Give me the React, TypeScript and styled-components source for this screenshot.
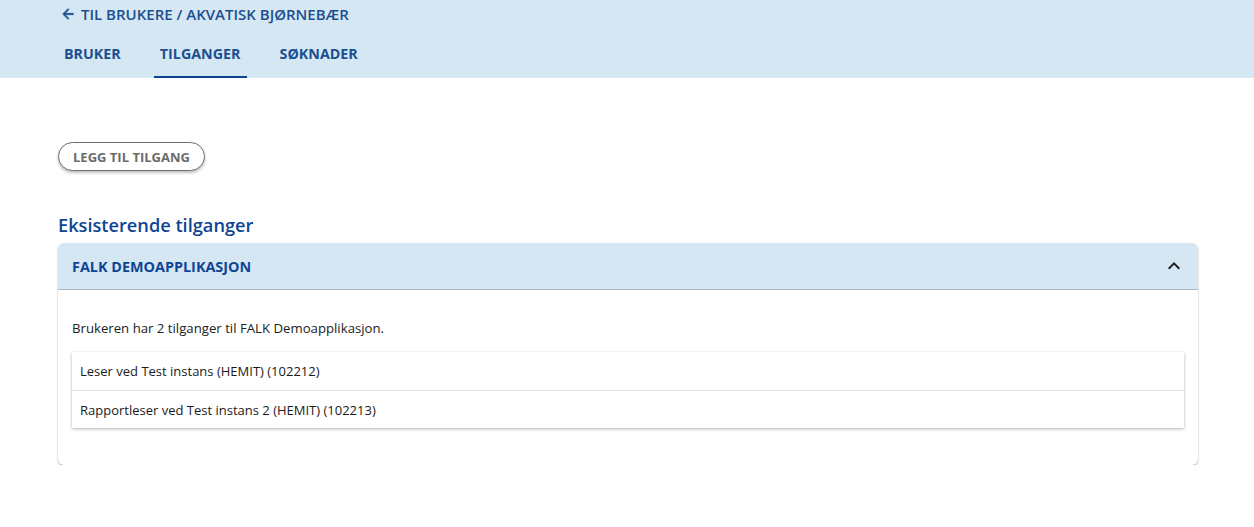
import React from "react";
import styled, { createGlobalStyle } from "styled-components";

const Global = createGlobalStyle`
  html, body { margin: 0; padding: 0; background: #ffffff; }
  body { font-family: "Open Sans", "Noto Sans", sans-serif; color: #1f1f1f; }
  * { box-sizing: border-box; }
`;

const Header = styled.header`
  background: #d6e7f4;
  height: 78px;
  padding: 0 0 0 58px;
  display: flex;
  flex-direction: column;
`;

const BackLink = styled.a`
  display: flex;
  align-items: center;
  gap: 5px;
  margin-top: 4px;
  height: 20px;
  padding-left: 2px;
  color: #1b4f8f;
  font-size: 15px;
  font-weight: 600;
  text-decoration: none;
`;

const Tabs = styled.nav`
  display: flex;
  margin-top: 14px;
  gap: 27px;
`;

const Tab = styled.div<{ $active?: boolean }>`
  height: 40px;
  display: flex;
  align-items: center;
  padding: 0 6px 8px 6px;
  color: #1b4f8f;
  font-size: 14.3px;
  font-weight: 700;
  border-bottom: 2px solid ${(p) => (p.$active ? "#0e4593" : "transparent")};
`;

const Main = styled.main`
  padding: 64px 56px 0 58px;
`;

const OutlineButton = styled.button`
  font-family: inherit;
  height: 29px;
  padding: 0 14px;
  border-radius: 15px;
  border: 1px solid #6e6e73;
  background: #fff;
  color: #6b6b6b;
  font-size: 13px;
  font-weight: 700;
  box-shadow: 0 2px 3px rgba(0, 0, 0, 0.25);
  cursor: pointer;
`;

const SectionTitle = styled.h2`
  margin: 41px 0 5px 0;
  color: #0e4593;
  font-size: 18.2px;
  font-weight: 600;
  line-height: 26px;
`;

const Card = styled.section`
  border-radius: 6px;
  background: #fff;
  box-shadow: 0 1px 2px rgba(0, 0, 0, 0.35);
  overflow: hidden;
`;

const CardHead = styled.div`
  height: 47px;
  background: #d6e7f4;
  border-bottom: 1px solid #a9b8c8;
  display: flex;
  align-items: center;
  justify-content: space-between;
  padding: 0 12px 0 14px;
`;

const CardTitle = styled.span`
  color: #0e4593;
  font-size: 14.4px;
  font-weight: 700;
`;

const CardBody = styled.div`
  padding: 29px 14px 37px 14px;
`;

const Lead = styled.p`
  margin: 0 0 15px 0;
  font-size: 13.2px;
  line-height: 18px;
  color: #222;
`;

const List = styled.ul`
  list-style: none;
  margin: 0;
  padding: 0;
  background: #fff;
  box-shadow: 0 1px 3px rgba(0, 0, 0, 0.3);
`;

const Row = styled.li`
  height: 38px;
  display: flex;
  align-items: center;
  padding: 0 8px;
  font-size: 13px;
  color: #1a1a1a;
  & + & {
    border-top: 1px solid #e2e2e8;
  }
`;

const ArrowLeft = () => (
  <svg width="16" height="16" viewBox="0 0 24 24" aria-hidden>
    <path d="M20 11H7.83l5.59-5.59L12 4l-8 8 8 8 1.41-1.41L7.83 13H20v-2z" fill="#1b4f8f" stroke="#1b4f8f" strokeWidth="1" />
  </svg>
);

const ChevronUp = () => (
  <svg width="24" height="24" viewBox="0 0 24 24" aria-hidden>
    <path d="M7.41 15.41 12 10.83l4.59 4.58L18 14l-6-6-6 6z" fill="#1d1d1d" />
  </svg>
);

export default function App() {
  return (
    <>
      <Global />
      <Header>
        <BackLink href="#">
          <ArrowLeft />
          TIL BRUKERE / AKVATISK BJØRNEBÆR
        </BackLink>
        <Tabs>
          <Tab>BRUKER</Tab>
          <Tab $active>TILGANGER</Tab>
          <Tab>SØKNADER</Tab>
        </Tabs>
      </Header>
      <Main>
        <OutlineButton>LEGG TIL TILGANG</OutlineButton>
        <SectionTitle>Eksisterende tilganger</SectionTitle>
        <Card>
          <CardHead>
            <CardTitle>FALK DEMOAPPLIKASJON</CardTitle>
            <ChevronUp />
          </CardHead>
          <CardBody>
            <Lead>Brukeren har 2 tilganger til FALK Demoapplikasjon.</Lead>
            <List>
              <Row>Leser ved Test instans (HEMIT) (102212)</Row>
              <Row>Rapportleser ved Test instans 2 (HEMIT) (102213)</Row>
            </List>
          </CardBody>
        </Card>
      </Main>
    </>
  );
}
